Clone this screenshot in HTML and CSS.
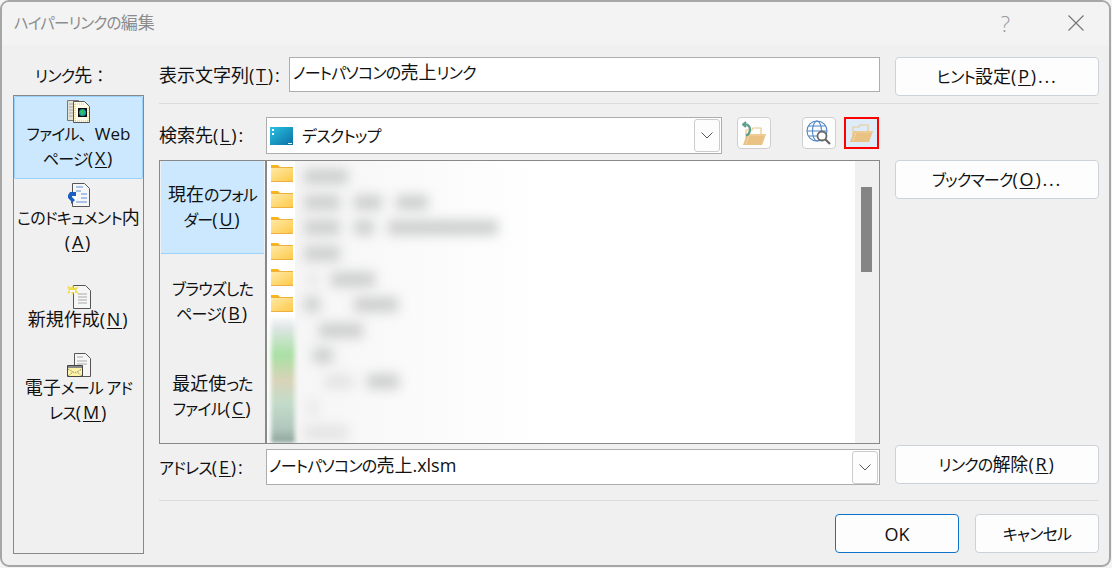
FILE: index.html
```html
<!DOCTYPE html>
<html lang="ja">
<head>
<meta charset="utf-8">
<title>ハイパーリンクの編集</title>
<link rel="stylesheet" href="styles.css">
</head>
<body>
<svg class="defs" width="0" height="0" aria-hidden="true">
  <defs>
    <linearGradient id="fg" x1="0" y1="0" x2="1" y2="1">
      <stop offset="0" stop-color="#ffeaa6"/>
      <stop offset="1" stop-color="#fdc94a"/>
    </linearGradient>
    <symbol id="folder" viewBox="0 0 22 17">
      <path d="M0 0h7l2 2v2H0z" fill="#fbb416"/>
      <path d="M0 2h22v15H0z" fill="#eeb040"/>
      <path d="M0 3h22v13H0z" fill="url(#fg)"/>
    </symbol>
    <symbol id="openfolder" viewBox="0 0 23 18">
      <path d="M3 16V3h6l1 -2h8v6" fill="none" stroke="#ecc88c" stroke-width="1.2"/>
      <path d="M4 7h19l-4 11H0z" fill="#eac284"/>
      <path d="M3 17L6 8h16" fill="none" stroke="#f4dcb0" stroke-width=".7"/>
    </symbol>
  </defs>
</svg>
<div class="dialog">
  <header class="titlebar">
    <span class="title"><span class="k">ハイパーリンクの</span>編集</span>
    <span class="help">?</span>
    <svg class="close" width="16" height="16" viewBox="0 0 16 16"><path d="M.5.5l15 15M15.500.5l-15 15" stroke="#777" stroke-width="1.2" fill="none"/></svg>
  </header>
  <div class="body">
    <aside class="linkcol">
      <div class="linkhead"><span class="k">リンク</span>先<span class="np np-colon">：</span></div>
      <nav class="places">
        <div class="place place-on">
          <svg class="picon" width="24" height="24" viewBox="0 0 24 24">
            <path d="M.5 1.500h11v20H.5z" fill="#e4e0d4" stroke="#777"/>
            <path d="M2 5h8M2 8h8M2 11h8M2 14h8M2 17h8" stroke="#aaa"/>
            <path d="M6.500 2.500h11l5 5v16h-16z" fill="#fffbe8" stroke="#555"/>
            <path d="M8 5h9M21 9v13M8 22h13M8 5v17" stroke="#e6c83c" stroke-dasharray="1 1"/>
            <path d="M11 9h9v9h-9z" fill="#0c0c0c"/>
            <circle cx="15.500" cy="13.500" r="3.500" fill="#1aa5a0"/>
            <path d="M13 12l3-1 1 3-2 2z" fill="#3bc24a"/>
          </svg>
          <div class="plabel"><span class="k">ファイル</span><span class="np">、</span><span class="w">Web</span><br><span class="k">ページ</span><span class="a">(<u>X</u>)</span></div>
        </div>
        <div class="place place-doc">
          <svg class="picon" width="24" height="24" viewBox="0 0 24 24">
            <path d="M5.500.5h12l5 5v18h-17z" fill="#f6f6f6" stroke="#555"/>
            <path d="M9 4h7M9 8h5M14 11h6M14 15h6M9 19h11" stroke="#8eb1e4" stroke-width="1.500"/>
            <path d="M1 12h9v5H1z" fill="#fff"/>
            <path d="M9 9L3 9 1 12v3l3 3v3l4-4-3-3v-1h4z" fill="#1b5fc1"/>
          </svg>
          <div class="plabel"><span class="k">このドキュメント</span>内<br><span class="a">(<u>A</u>)</span></div>
        </div>
        <div class="place place-new">
          <svg class="picon" width="24" height="24" viewBox="0 0 24 24">
            <path d="M6.500.5h12l5 5v18h-17z" fill="#f6f6f6" stroke="#555"/>
            <path d="M11 9h9M11 12h9M11 15h9M11 18h9" stroke="#aaa"/>
            <path d="M0 1l4 1.500 2-2.500 1 3 5-1-3 3 3 4-5-2-1 3-2-3-4 2 2-4z" fill="#f2dc46"/>
            <path d="M3 5h5v2H3z" fill="#fff"/>
          </svg>
          <div class="plabel">新規作成<span class="a">(<u>N</u>)</span></div>
        </div>
        <div class="place place-mail">
          <svg class="picon" width="24" height="24" viewBox="0 0 24 24">
            <path d="M7.500.5h11l5 5v18h-16z" fill="#f6f6f6" stroke="#555"/>
            <path d="M10 4h6M10 8h10M10 11h10" stroke="#aaa"/>
            <path d="M.5 12.500h15v11H.5z" fill="#fff3a6" stroke="#444"/>
            <path d="M1 13h14v2H1z" fill="#888"/>
            <path d="M1 16l7 4 7-4M1 23l5-4M15 23l-5-4" stroke="#777" fill="none" stroke-dasharray="1 1"/>
          </svg>
          <div class="plabel">電子<span class="k">メール アド</span><br><span class="k">レス</span><span class="a">(<u>M</u>)</span></div>
        </div>
      </nav>
    </aside>
    <main class="content">
      <div class="toprow">
        <label class="lbl lbl-show">表示文字列<span class="a">(<u>T</u>):</span></label>
        <div class="field"><span class="k">ノートパソコンの</span>売上<span class="k">リンク</span></div>
        <button class="btn btn-side"><span class="k">ヒント</span>設定<span class="a">(<u>P</u>)...</span></button>
      </div>
      <div class="sep sep-top"></div>
      <div class="midrow">
        <div class="main">
          <div class="searchrow">
            <label class="lbl lbl-look">検索先<span class="a">(<u>L</u>):</span></label>
            <div class="combo combo-look">
              <svg class="desk" width="23" height="18" viewBox="0 0 23 18">
                <defs><linearGradient id="dg" x1="0" y1="0" x2="1" y2="1"><stop offset="0" stop-color="#2cc3de"/><stop offset="1" stop-color="#0a6fa8"/></linearGradient></defs>
                <path d="M0 0h23v18H0z" fill="url(#dg)"/>
                <path d="M2 2h2v2H2zM2 6h2v2H2z" fill="#fff"/>
                <path d="M18 16h4v1h-4z" fill="#dff"/>
              </svg>
              <span class="cval k">デスクトップ</span>
              <span class="drop"><svg width="12" height="7" viewBox="0 0 12 7"><path d="M.5.5L6 6l5.500-5.500" fill="none" stroke="#555"/></svg></span>
            </div>
            <button class="tool tool-up">
              <svg class="ico" width="24" height="24" viewBox="0 0 24 24">
                <use href="#openfolder" x="1" y="6" width="23" height="18"/>
                <path d="M4 1L1 3.500 4 6M1.500 3.500h3.500c5 3 3 10-1 11" fill="none" stroke="#5f9f8e" stroke-width="2.200"/>
              </svg>
            </button>
            <button class="tool tool-web">
              <svg class="ico" width="26" height="26" viewBox="0 0 26 26">
                <g fill="none" stroke="#4f86c6" stroke-width="1.100">
                  <circle cx="11" cy="11" r="10"/>
                  <ellipse cx="11" cy="11" rx="4.500" ry="10"/>
                  <path d="M1 11h20M2.500 6h17M2.500 16h17"/>
                </g>
                <circle cx="16" cy="16" r="4.500" fill="#fff" stroke="#666" stroke-width="1.800"/>
                <path d="M19.500 19.500l4.500 4.500" stroke="#666" stroke-width="2.200"/>
              </svg>
            </button>
            <button class="tool tool-open">
              <svg class="ico" width="23" height="18" viewBox="0 0 23 18"><use href="#openfolder" width="23" height="18"/></svg>
            </button>
          </div>
          <div class="browser">
            <div class="tabs">
              <div class="tab tab-on"><div>現在<span class="k">のフォル</span><br><span class="k">ダー</span><span class="a">(<u>U</u>)</span></div></div>
              <div class="tab"><div><span class="k">ブラウズした</span><br><span class="k">ページ</span><span class="a">(<u>B</u>)</span></div></div>
              <div class="tab"><div>最近使<span class="k">った</span><br><span class="k">ファイル</span><span class="a">(<u>C</u>)</span></div></div>
            </div>
            <div class="list">
              <div class="icons">
                <svg class="fld" width="22" height="17"><use href="#folder" width="22" height="17"/></svg>
                <svg class="fld" width="22" height="17"><use href="#folder" width="22" height="17"/></svg>
                <svg class="fld" width="22" height="17"><use href="#folder" width="22" height="17"/></svg>
                <svg class="fld" width="22" height="17"><use href="#folder" width="22" height="17"/></svg>
                <svg class="fld" width="22" height="17"><use href="#folder" width="22" height="17"/></svg>
                <svg class="fld" width="22" height="17"><use href="#folder" width="22" height="17"/></svg>
                <div class="thumbs"></div>
              </div>
              <div class="names">
                <div class="row"><i class="b b44 i8"></i></div>
                <div class="row"><i class="b b36 i8"></i><i class="b b28"></i><i class="b b32"></i></div>
                <div class="row"><i class="b b36 i8"></i><i class="b b20"></i><i class="b b110"></i></div>
                <div class="row"><i class="b b36 i8"></i></div>
                <div class="row"><i class="b b8 i14 faint"></i><i class="b b44"></i></div>
                <div class="row"><i class="b b16 i8"></i><i class="b b44 gap20"></i></div>
                <div class="row"><i class="b b44 i22"></i></div>
                <div class="row"><i class="b b20 i16"></i></div>
                <div class="row"><i class="b b28 i28 faint"></i><i class="b b32"></i></div>
                <div class="row"><i class="b b8 i14 faint"></i></div>
                <div class="row"><i class="b b44 i8 faint"></i></div>
              </div>
            </div>
            <div class="vscroll"><div class="thumb"></div></div>
          </div>
          <div class="addrrow">
            <label class="lbl lbl-look"><span class="k">アドレス</span><span class="a">(<u>E</u>):</span></label>
            <div class="combo combo-addr">
              <span class="cval cval-addr"><span class="k">ノートパソコンの</span>売上.xlsm</span>
              <span class="drop"><svg width="12" height="7" viewBox="0 0 12 7"><path d="M.5.5L6 6l5.500-5.500" fill="none" stroke="#555"/></svg></span>
            </div>
          </div>
        </div>
        <div class="side">
          <button class="btn btn-side btn-mark"><span class="k">ブックマーク</span><span class="a">(<u>O</u>)...</span></button>
          <button class="btn btn-side btn-unlink"><span class="k">リンクの</span>解除<span class="a">(<u>R</u>)</span></button>
        </div>
      </div>
      <div class="sep sep-bottom"></div>
      <div class="actions">
        <button class="btn btn-act btn-ok">OK</button>
        <button class="btn btn-act"><span class="k">キャンセル</span></button>
      </div>
    </main>
  </div>
</div>
</body>
</html>
```

FILE: styles.css
```css
* { box-sizing: border-box; }
html, body { margin: 0; padding: 0; }
body {
  width: 1112px;
  height: 568px;
  overflow: hidden;
  background: #f4f4f4;
  font-family: "Open Sans", "Noto Sans CJK JP", sans-serif;
  font-feature-settings: "palt";
  font-size: 18px;
  line-height: 24px;
  color: #111;
}
.defs { position: absolute; }
u { text-underline-offset: 2px; text-decoration-thickness: 1px; }
.k { font-size: 16px; letter-spacing: -.8px; }
.a { letter-spacing: 1.8px; }
.w { font-size: 17px; }
.np { font-feature-settings: normal; font-size: 16px; letter-spacing: -6px; margin-right: 6px; }
.np-colon { letter-spacing: 0; margin-right: 0; }
.dialog {
  width: 1111px;
  height: 567px;
  border: 2px solid #a6a6a6;
  border-radius: 9px;
  background: #f0f0f0;
  overflow: hidden;
  display: flex;
  flex-direction: column;
}
.titlebar {
  height: 43px;
  flex: none;
  background: #f3f3f3;
  display: flex;
  align-items: center;
  padding: 0 25px 2px 12px;
}
.title { color: #8c8c8c; flex: 1; font-size: 17px; }
.title .k { font-size: 15.500px; }
.help { color: #9a9a9a; margin-right: 58px; font-size: 22px; font-weight: 300; }
.body { flex: 1; display: flex; padding: 12px 10px 11px 11px; gap: 15px; min-height: 0; }
.linkcol { width: 131px; flex: none; display: flex; flex-direction: column; }
.linkhead { height: 38px; padding: 6px 0 0 22px; }
.places { flex: 1; border: 1px solid #888; display: flex; flex-direction: column; }
.place { display: flex; flex-direction: column; align-items: center; text-align: center; }
.place-on {
  height: 83px;
  padding-top: 2px;
  background: #cce8ff;
  border: 1px solid #99d1ff;
  border-radius: 2px;
}
.picon { flex: none; margin-bottom: -1px; }
.place-doc { height: 101px; padding-top: 4px; }
.place-new { height: 69px; padding-top: 5px; }
.place-mail { padding-top: 4px; }
.plabel { white-space: nowrap; line-height: 23.500px; }
.content { width: 940px; flex: none; display: flex; flex-direction: column; }
.toprow { display: flex; align-items: flex-start; }
.lbl { display: block; white-space: nowrap; padding-top: 6px; }
.lbl-show { width: 130px; }
.lbl-look { width: 107px; }
.field {
  width: 591px;
  height: 35px;
  background: #fff;
  border: 1px solid #adadad;
  padding: 2px 3px;
  margin-right: 15px;
}
.btn {
  font: inherit;
  color: inherit;
  background: #fdfdfd;
  border: 1px solid #ccd2da;
  border-radius: 4px;
  padding: 0;
}
.btn-side { width: 204px; height: 39px; }
.sep { height: 1px; background: #dcdcdc; flex: none; }
.sep-top { margin-top: 7px; }
.midrow { display: flex; margin-top: 13px; gap: 15px; }
.main { width: 721px; flex: none; }
.searchrow { display: flex; align-items: flex-start; height: 37px; }
.combo {
  display: flex;
  align-items: center;
  background: #fff;
  border: 1px solid #adadad;
  padding: 1px;
}
.combo-look { width: 456px; height: 37px; margin-right: 15px; }
.combo-addr { width: 614px; height: 36px; }
.desk { margin-left: 2px; margin-right: 9px; }
.cval { flex: 1; }
.cval-addr { padding-left: 1px; margin-top: -3px; }
.drop {
  width: 26px;
  height: 33px;
  flex: none;
  border: 1px solid #ccc;
  border-radius: 3px;
  background: #fdfdfd;
  display: flex;
  align-items: center;
  justify-content: center;
}
.tool {
  height: 32px;
  width: 34px;
  flex: none;
  background: #fdfdfd;
  border: 1px solid #cfcfcf;
  border-radius: 4px;
  padding: 0;
  display: flex;
  align-items: center;
  justify-content: center;
}
.tool-web { margin-left: 31px; }
.tool-open {
  margin-left: 8px;
  width: 35px;
  background: #deecf9;
  border: 2px solid #f00;
  border-radius: 0;
}
.browser {
  margin-top: 6px;
  height: 284px;
  border: 1px solid #888;
  display: flex;
}
.tabs { width: 105px; flex: none; display: flex; flex-direction: column; padding: 0 1px; }
.tab { flex: 1; display: flex; align-items: center; justify-content: center; text-align: center; }
.tab-on { flex: none; height: 93px; background: #cce8ff; border-bottom: 1px solid #99d1ff; }
.list {
  width: 590px;
  flex: none;
  background: #fff;
  border-left: 2px solid #888;
  display: flex;
  overflow: hidden;
}
.icons { width: 28px; flex: none; padding: 4px 0 0 4px; display: flex; flex-direction: column; }
.fld { flex: none; margin-bottom: 9px; }
.thumbs {
  width: 24px;
  flex: 1;
  margin-top: -4px;
  background: linear-gradient(#fafafa 0, #dfe6e6 8%, #a9e0a4 30%, #d9d3b8 50%, #c3dcc9 68%, #b3c7be 88%, #8da59b 100%);
  filter: blur(2px);
}
.names {
  flex: 1;
  overflow: hidden;
  padding-top: 3px;
  background: linear-gradient(90deg, #f6f6f6, #fff 45%);
}
.row { height: 25.600px; display: flex; align-items: center; gap: 14px; filter: blur(6px); }
.b { display: block; height: 15px; background: #cdcece; flex: none; }
.faint { background: #e4e4e4; }
.i8 { margin-left: 9px; }
.i14 { margin-left: 14px; }
.i16 { margin-left: 18px; }
.i22 { margin-left: 24px; }
.i28 { margin-left: 30px; }
.gap20 { margin-left: 20px; }
.b8 { width: 8px; }
.b16 { width: 16px; }
.b20 { width: 20px; }
.b28 { width: 28px; }
.b32 { width: 32px; }
.b36 { width: 36px; }
.b44 { width: 44px; }
.b110 { width: 110px; }
.vscroll { flex: 1; background: #f0f0f0; padding: 26px 7px 0 6px; }
.thumb { height: 85px; background: #858585; width: 11px; }
.addrrow { display: flex; margin-top: 5px; align-items: flex-start; }
.side { flex: 1; display: flex; flex-direction: column; padding: 43px 0 1px; }
.btn-unlink { margin-top: auto; }
.sep-bottom { margin-top: 15px; }
.actions { display: flex; justify-content: flex-end; gap: 16px; margin-top: 13px; }
.btn-act { width: 124px; height: 39px; }
.btn-ok { border-color: #0f74c9; }
```
